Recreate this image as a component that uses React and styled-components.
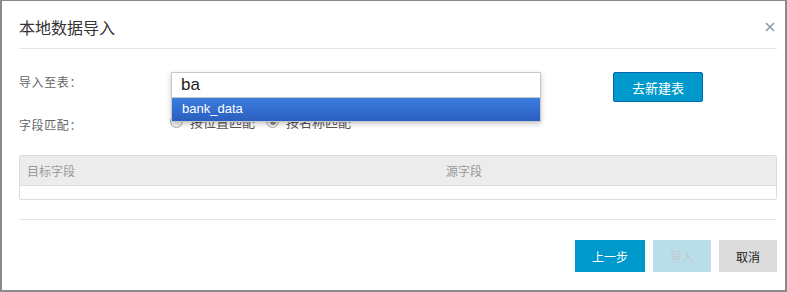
import React from "react";
import styled, { createGlobalStyle } from "styled-components";

const Global = createGlobalStyle`
  html, body { margin: 0; padding: 0; background: #fff; }
  body { font-family: "Liberation Sans", "Noto Sans CJK SC", sans-serif; }
  * { box-sizing: border-box; }
`;

const Dialog = styled.div`
  width: 787px;
  height: 292px;
  border: 2px solid #8a8a8a;
  border-top-width: 1px;
  background: #fff;
  display: flex;
  flex-direction: column;
  padding: 0 8px 0 17px;
`;

const Header = styled.div`
  height: 48px;
  border-bottom: 1px solid #e5e5e5;
  display: flex;
  align-items: center;
  justify-content: space-between;
  padding-top: 4px;
`;

const Title = styled.div`
  font-size: 16px;
  color: #333;
  font-family: "Noto Sans CJK SC", sans-serif;
`;

const Close = styled.span`
  width: 12px;
  height: 12px;
  margin-right: 1px;
  display: flex;
  svg { display: block; }
`;

const Body = styled.div`
  padding-top: 23px;
  display: flex;
  flex-direction: column;
`;

const Row = styled.div`
  display: flex;
  align-items: flex-start;
  height: ${(p) => p.$h}px;
`;

const Label = styled.div`
  width: 152px;
  flex: none;
  font-size: 12px;
  color: #666;
  letter-spacing: 0.6px;
  font-family: "Noto Sans CJK SC", sans-serif;
  padding-top: ${(p) => p.$pt || 0}px;
`;

const Combo = styled.div`
  position: relative;
  width: 370px;
  height: 25px;
  flex: none;
`;

const Input = styled.div`
  height: 25px;
  border: 1px solid #cfcfcf;
  border-bottom: none;
  padding-left: 10px;
  font-size: 16px;
  line-height: 24px;
  color: #222;
  background: #fff;
`;

const Menu = styled.div`
  position: absolute;
  left: 0;
  top: 0;
  width: 370px;
  border: 1px solid #c8c8c8;
  box-shadow: 0 2px 5px rgba(0, 0, 0, 0.22);
  background: #fff;
  z-index: 2;
  pointer-events: none;
`;

const MenuInput = styled.div`
  height: 25px;
  padding-left: 9px;
  font-size: 17px;
  line-height: 24px;
  color: #222;
  border-bottom: 1px solid #c8c8c8;
`;

const Option = styled.div`
  height: 23px;
  padding-left: 10px;
  font-size: 13px;
  line-height: 22px;
  color: #fff;
  background: linear-gradient(#3b7ddd, #2a5fbf);
`;

const PrimaryBtn = styled.button`
  margin-left: 72px;
  width: 90px;
  height: 30px;
  background: #0099cc;
  border: 1px solid #0566b0;
  border-radius: 2px;
  color: #fff;
  font-size: 13px;
  font-family: "Noto Sans CJK SC", sans-serif;
  padding: 0;
`;

const Radios = styled.div`
  display: flex;
  align-items: center;
  margin-top: -3px;
  font-size: 13px;
  color: #555;
  font-family: "Noto Sans CJK SC", sans-serif;
`;

const RadioItem = styled.label`
  display: flex;
  align-items: center;
  gap: 7px;
  margin-right: 12px;
`;

const RadioDot = styled.span`
  width: 13px;
  height: 13px;
  margin-left: -1px;
  border-radius: 50%;
  border: 1px solid #aaa;
  background: #f2f2f2;
  position: relative;
  &::after {
    content: "";
    display: ${(p) => (p.$checked ? "block" : "none")};
    position: absolute;
    left: 2.5px;
    top: 2.5px;
    width: 6px;
    height: 6px;
    border-radius: 50%;
    background: #888;
  }
`;

const Table = styled.div`
  margin-top: 15px;
  border: 1px solid #dcdcdc;
  border-radius: 2px;
`;

const THead = styled.div`
  height: 30px;
  background: #ececec;
  border-bottom: 1px solid #dcdcdc;
  display: grid;
  grid-template-columns: 419px 1fr;
  align-items: center;
  font-size: 12px;
  color: #999;
  font-family: "Noto Sans CJK SC", sans-serif;
`;

const Th = styled.div`
  padding-left: 7px;
`;

const TBody = styled.div`
  height: 13px;
`;

const Divider = styled.div`
  margin-top: 19px;
  border-top: 1px solid #e5e5e5;
`;

const Footer = styled.div`
  display: flex;
  justify-content: flex-end;
  gap: 8px;
  padding-top: 20px;
`;

const FootBtn = styled.button`
  width: ${(p) => p.$w}px;
  height: 32px;
  border: none;
  padding: 0;
  font-size: 12px;
  font-family: "Noto Sans CJK SC", sans-serif;
  background: ${(p) => p.$bg};
  color: ${(p) => p.$color};
`;

export default function App() {
  return (
    <>
      <Global />
      <Dialog>
        <Header>
          <Title>本地数据导入</Title>
          <Close>
            <svg width="12" height="12" viewBox="0 0 12 12">
              <path d="M2 2 L10 10 M10 2 L2 10" stroke="#8a9bb0" strokeWidth="1.6" />
            </svg>
          </Close>
        </Header>
        <Body>
          <Row $h={43}>
            <Label $pt={1}>导入至表：</Label>
            <Combo>
              <Input>ba</Input>
              <Menu>
                <MenuInput>ba</MenuInput>
                <Option>bank_data</Option>
              </Menu>
            </Combo>
            <PrimaryBtn>去新建表</PrimaryBtn>
          </Row>
          <Row $h={25}>
            <Label $pt={1}>字段匹配：</Label>
            <Radios>
              <RadioItem>
                <RadioDot />
                按位置匹配
              </RadioItem>
              <RadioItem>
                <RadioDot $checked />
                按名称匹配
              </RadioItem>
            </Radios>
          </Row>
          <Table>
            <THead>
              <Th>目标字段</Th>
              <Th>源字段</Th>
            </THead>
            <TBody />
          </Table>
          <Divider />
          <Footer>
            <FootBtn $w={70} $bg="#0099cc" $color="#fff">上一步</FootBtn>
            <FootBtn $w={58} $bg="#b8dfe9" $color="#c4c9cc">导入</FootBtn>
            <FootBtn $w={58} $bg="#dcdcdc" $color="#222">取消</FootBtn>
          </Footer>
        </Body>
      </Dialog>
    </>
  );
}
